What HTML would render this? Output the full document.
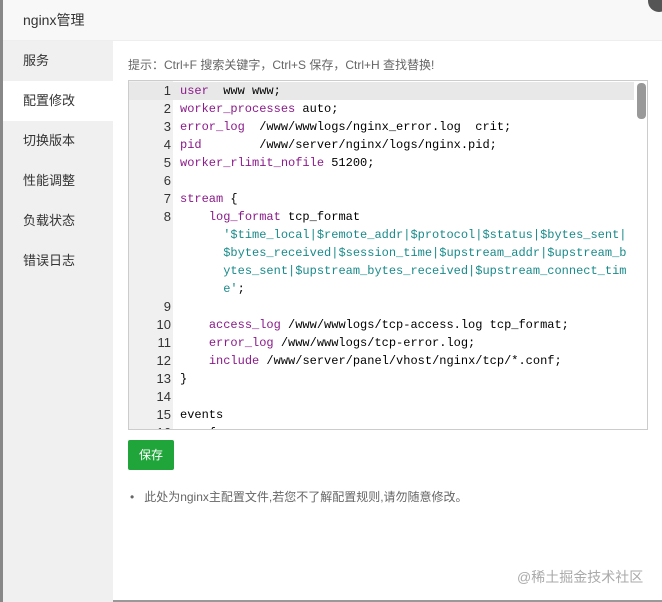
<!DOCTYPE html>
<html><head><meta charset="utf-8"><style>
body{margin:0;width:662px;height:602px;overflow:hidden;background:#fff;font-family:"Liberation Sans","Noto Sans CJK SC",sans-serif;position:relative}
.lstrip{position:absolute;left:0;top:0;width:3px;height:602px;background:#888}
.title{position:absolute;left:3px;top:0;right:0;height:40px;background:#f8f8f8;border-bottom:1px solid #eee;font-size:14px;color:#333;line-height:40px;padding-left:20px}
.close{position:absolute;right:-8px;top:-10px;width:22px;height:22px;border-radius:50%;background:#555}
.side{position:absolute;left:3px;top:41px;width:110px;height:561px;background:#f0f0f0}
.side div{height:40px;line-height:40px;padding-left:20px;font-size:13px;color:#333}
.side .on{background:#fff}
.tip{position:absolute;left:128px;top:56px;font-size:12px;color:#666}
.ed{position:absolute;left:128px;top:80px;width:518px;height:348px;border:1px solid #ccc;overflow:hidden;background:#fff}
.gut{position:absolute;left:0;top:0;width:44px;height:100%;background:#f0f0f0}
.code{position:absolute;left:0;top:1px;font-family:"Liberation Mono",monospace;font-size:12px;line-height:18px;color:#000;width:505px}
.ln{display:flex}
.ln .n{width:42px;text-align:right;color:#333;flex:none;font-family:"Liberation Sans",sans-serif;font-size:13px}
.ln .t{padding-left:9px;white-space:pre}
.act{background:#e8e8e8}
.k{color:#8b1a8b}
.s{color:#1a8a8a}
.sb{position:absolute;right:1px;top:2px;width:9px;height:36px;background:#999;border-radius:4px}
.btn{position:absolute;left:128px;top:440px;width:46px;height:30px;background:#20a53a;color:#fff;font-size:12px;line-height:30px;text-align:center;border-radius:2px}
.note{position:absolute;left:130px;top:488px;font-size:12px;color:#666}
.wm{position:absolute;left:517px;top:567px;font-size:14px;color:#aaa}
.bot{position:absolute;left:113px;bottom:0;right:0;height:2px;background:#999}
</style></head><body>
<div class="lstrip"></div>
<div class="title">nginx管理<div class="close"></div></div>
<div class="side"><div>服务</div><div class="on">配置修改</div><div>切换版本</div><div>性能调整</div><div>负载状态</div><div>错误日志</div></div>
<div class="tip">提示：Ctrl+F 搜索关键字，Ctrl+S 保存，Ctrl+H 查找替换!</div>
<div class="ed"><div class="gut"></div>
<div class="code">
<div class="ln act"><span class="n">1</span><span class="t"><span class="k">user</span>  www www;</span></div>
<div class="ln"><span class="n">2</span><span class="t"><span class="k">worker_processes</span> auto;</span></div>
<div class="ln"><span class="n">3</span><span class="t"><span class="k">error_log</span>  /www/wwwlogs/nginx_error.log  crit;</span></div>
<div class="ln"><span class="n">4</span><span class="t"><span class="k">pid</span>        /www/server/nginx/logs/nginx.pid;</span></div>
<div class="ln"><span class="n">5</span><span class="t"><span class="k">worker_rlimit_nofile</span> 51200;</span></div>
<div class="ln"><span class="n">6</span><span class="t"> </span></div>
<div class="ln"><span class="n">7</span><span class="t"><span class="k">stream</span> {</span></div>
<div class="ln"><span class="n">8</span><span class="t">    <span class="k">log_format</span> tcp_format
      <span class="s">'$time_local|$remote_addr|$protocol|$status|$bytes_sent|</span>
      <span class="s">$bytes_received|$session_time|$upstream_addr|$upstream_b</span>
      <span class="s">ytes_sent|$upstream_bytes_received|$upstream_connect_tim</span>
      <span class="s">e'</span>;</span></div>
<div class="ln"><span class="n">9</span><span class="t"> </span></div>
<div class="ln"><span class="n">10</span><span class="t">    <span class="k">access_log</span> /www/wwwlogs/tcp-access.log tcp_format;</span></div>
<div class="ln"><span class="n">11</span><span class="t">    <span class="k">error_log</span> /www/wwwlogs/tcp-error.log;</span></div>
<div class="ln"><span class="n">12</span><span class="t">    <span class="k">include</span> /www/server/panel/vhost/nginx/tcp/*.conf;</span></div>
<div class="ln"><span class="n">13</span><span class="t">}</span></div>
<div class="ln"><span class="n">14</span><span class="t"> </span></div>
<div class="ln"><span class="n">15</span><span class="t">events</span></div>
<div class="ln"><span class="n">16</span><span class="t">    {</span></div>
</div><div class="sb"></div></div>
<div class="btn">保存</div>
<div class="note">•&nbsp;&nbsp;&nbsp;此处为nginx主配置文件,若您不了解配置规则,请勿随意修改。</div>
<div class="wm">@稀土掘金技术社区</div>
<div class="bot"></div>
</body></html>
